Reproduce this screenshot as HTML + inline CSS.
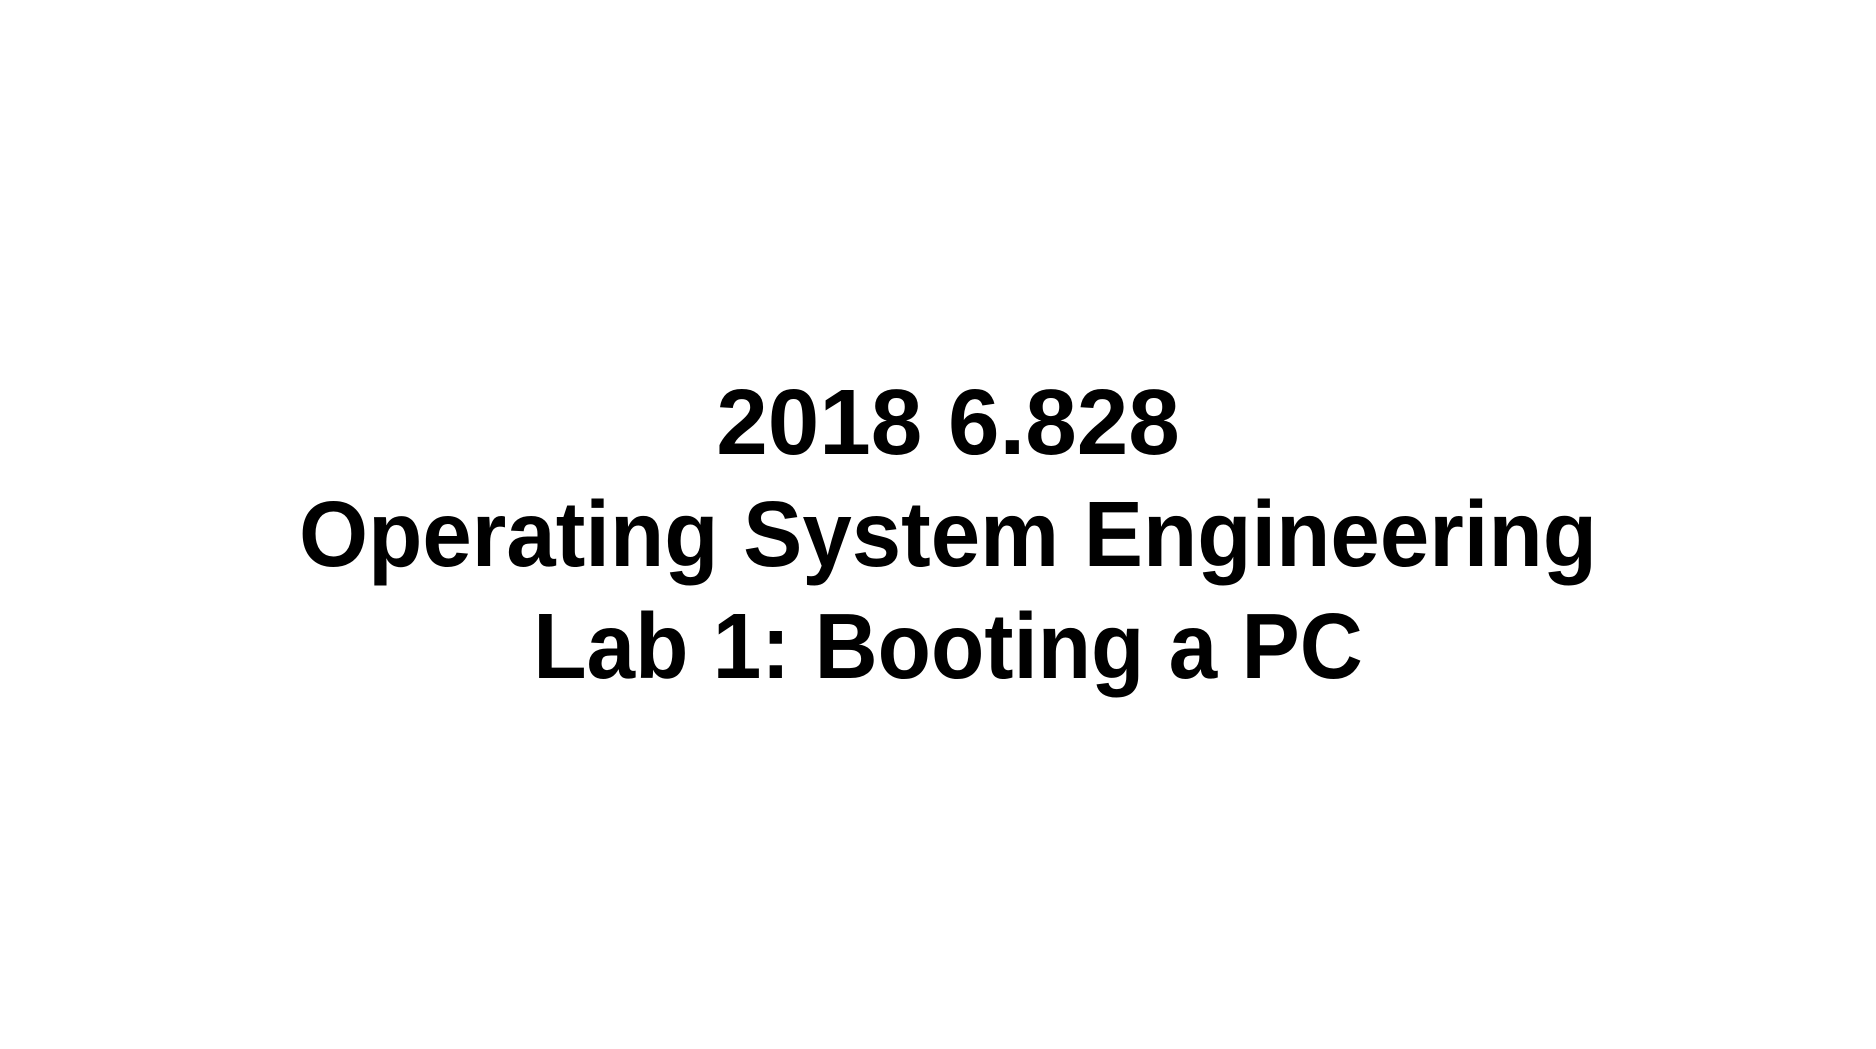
<!DOCTYPE html>
<html><head><meta charset="utf-8"><style>
html,body{margin:0;padding:0;background:#fff;width:1876px;height:1049px;overflow:hidden}
.t{position:absolute;left:10px;width:1876px;top:366px;text-align:center;font-family:"Liberation Sans",sans-serif;font-weight:bold;font-size:93px;line-height:112px;color:#000}
.t div{transform-origin:938px 0}
</style></head><body>
<div class="t"><div style="transform:scaleX(0.996)">2018 6.828</div><div style="transform:scaleX(0.955)">Operating System Engineering</div><div style="transform:scaleX(0.939)">Lab 1: Booting a PC</div></div>
</body></html>
